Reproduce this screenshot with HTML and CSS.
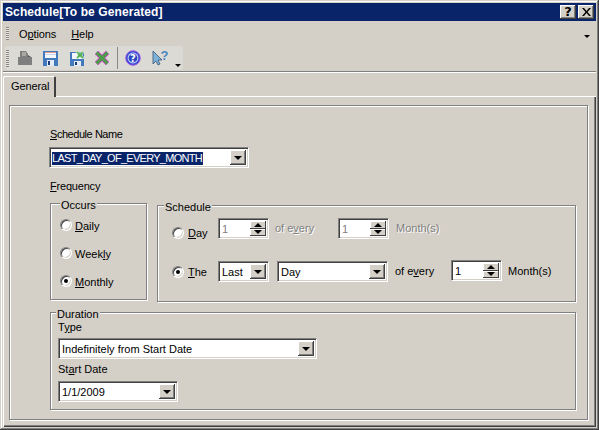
FILE: index.html
```html
<!DOCTYPE html>
<html lang="en">
<head>
<meta charset="utf-8">
<title>Schedule</title>
<link rel="stylesheet" href="styles.css">
</head>
<body>
<div class="window">
  <div class="titlebar">
    <span class="title">Schedule[To be Generated]</span>
    <span class="capbtn qm">?</span>
    <span class="capbtn cl"><svg width="9" height="8" viewBox="0 0 9 8"><path d="M0 0h2l2.500 3 2.500-3h2L5.500 4 9 8H7L4.500 5 2 8H0l3.500-4z" fill="#000"/></svg></span>
  </div>
  <div class="menubar">
    <span class="grip"></span>
    <span class="menuitem opt">O<u>p</u>tions</span>
    <span class="menuitem"><u>H</u>elp</span>
    <span class="chev"></span>
  </div>
  <div class="toolrow">
    <div class="toolbar">
      <span class="grip short"></span>
      <svg class="ic i1" width="16" height="16" viewBox="0 0 16 16"><path d="M3 1h6l2 3v3h4v8H1V7h2z" fill="#7f7f7f"/><path d="M5 2h4v4H5z" fill="#aaa8a3"/><path d="M11 5l3 2h-3z" fill="#55534f"/></svg>
      <svg class="ic i2" width="15" height="15" viewBox="0 0 15 15"><path d="M0 0h15v15H0z" fill="#4279bd"/><path d="M2 1h11v6H2z" fill="#f4f7fb"/><path d="M2 1h11v1H2z" fill="#e79a90"/><path d="M2 3h11v1H2z" fill="#c9d8ec"/><path d="M4 9h7v6H4z" fill="#e4ebf5"/><path d="M5 10h2v4H5z" fill="#1c3d78"/></svg>
      <svg class="ic i3" width="16" height="16" viewBox="0 0 16 16"><path d="M1 2h14v14H1z" fill="#4279bd"/><path d="M3 3h10v6H3z" fill="#f4f7fb"/><path d="M5 11h7v5H5z" fill="#e4ebf5"/><path d="M6 12h2v3H6z" fill="#1c3d78"/><path d="M8 1l3 2 3-2 1 1-2 3 2 3-1 1-3-2-3 2-1-1 2-3-2-3z" fill="#55b055" stroke="#e0f4e0" stroke-width=".7"/></svg>
      <svg class="ic i4" width="16" height="16" viewBox="0 0 16 16"><path d="M2.500 2.500l11 11M13.500 2.500l-11 11" stroke="#e040e0" stroke-width="4.600"/><path d="M2.500 2.500l11 11M13.500 2.500l-11 11" stroke="#4f9a4a" stroke-width="3.200"/></svg>
      <span class="tsep"></span>
      <svg class="ic i5" width="16" height="16" viewBox="0 0 16 16"><circle cx="8" cy="8" r="7.300" fill="#3b4fd8" stroke="#a050e0" stroke-width=".9"/><circle cx="8" cy="8" r="5.400" fill="#c8d4f4"/><circle cx="8" cy="8" r="4.400" fill="#2d43c0"/><text class="qmark" x="8" y="11.500" text-anchor="middle">?</text></svg>
      <svg class="ic i6" width="17" height="16" viewBox="0 0 17 16"><path d="M1 1v13l3-3 2 4 2-1-2-4h4z" fill="#7fb2d8" stroke="#39577a" stroke-width=".8"/><text class="qsmall" x="12.500" y="10" text-anchor="middle">?</text></svg>
      <span class="chev small"></span>
    </div>
  </div>
  <div class="tabstrip">
    <span class="tab">General</span>
  </div>
  <div class="tabpage">
    <div class="inner">
      <label class="lab l-name"><u>S</u>chedule Name</label>
      <div class="control combo selected w200"><span class="val"><span class="sel">LAST_DAY_OF_EVERY_MONTH</span></span><span class="drop"><i></i></span></div>
      <label class="lab l-freq"><u>F</u>requency</label>
      <div class="freq">
        <div class="group occurs">
          <span class="legend lg-occ">Occurs</span>
          <div class="radrow"><span class="radio"></span><span class="lab"><u>D</u>aily</span></div>
          <div class="radrow"><span class="radio"></span><span class="lab">Week<u>l</u>y</span></div>
          <div class="radrow"><span class="radio on"></span><span class="lab"><u>M</u>onthly</span></div>
        </div>
        <div class="group sched">
          <span class="legend lg-sch">Schedule</span>
          <div class="srow r1">
            <span class="radio low"></span>
            <span class="lab tag low"><u>D</u>ay</span>
            <div class="control spin dis w51"><span class="val">1</span><span class="arrows"><b class="up"></b><b class="dn"></b></span></div>
            <span class="lab dimt g1">of e<u>v</u>ery</span>
            <div class="control spin dis w51"><span class="val">1</span><span class="arrows"><b class="up"></b><b class="dn"></b></span></div>
            <span class="lab dimt g2 g2b">Month(s)</span>
          </div>
          <div class="srow r2">
            <span class="radio on"></span>
            <span class="lab tag"><u>T</u>he</span>
            <div class="control combo w51"><span class="val">Last</span><span class="drop"><i></i></span></div>
            <div class="control combo w111 g3"><span class="val">Day</span><span class="drop"><i></i></span></div>
            <span class="lab g4">of e<u>v</u>ery</span>
            <div class="control spin w51 g5"><span class="val">1</span><span class="arrows"><b class="up"></b><b class="dn"></b></span></div>
            <span class="lab g2">Month(s)</span>
          </div>
        </div>
      </div>
      <div class="group duration">
        <span class="legend lg-dur">Duration</span>
        <label class="lab l-type">T<u>y</u>pe</label>
        <div class="control combo w259"><span class="val">Indefinitely from Start Date</span><span class="drop"><i></i></span></div>
        <label class="lab l-start">St<u>a</u>rt Date</label>
        <div class="control combo w120"><span class="val">1/1/2009</span><span class="drop"><i></i></span></div>
      </div>
    </div>
  </div>
</div>
</body>
</html>
```

FILE: styles.css
```css
* { box-sizing: border-box; }
html, body { margin: 0; padding: 0; }
body { width: 599px; height: 430px; overflow: hidden; background: #d4d0c8; }

.window {
  width: 599px; height: 430px;
  padding: 3px;
  display: flex; flex-direction: column;
  background: #d4d0c8;
  font: 11px/13px "Liberation Sans", Arial, sans-serif;
  color: #000;
  box-shadow: inset -1px -1px #404040, inset 1px 1px #d4d0c8, inset -2px -2px #808080, inset 2px 2px #fff;
}

.titlebar {
  height: 18px; flex: none;
  display: flex; align-items: center;
  padding: 0 2px;
  background: #0a246a;
  color: #fff;
}
.title { font: bold 12px/18px "Liberation Sans", sans-serif; letter-spacing: 0.1px; flex: 1; }
.capbtn {
  width: 16px; height: 14px; flex: none;
  display: flex; align-items: center; justify-content: center;
  background: #d4d0c8; color: #000;
  box-shadow: inset -1px -1px #404040, inset 1px 1px #fff, inset -2px -2px #808080;
}
.qm { font: bold 13px/14px "DejaVu Sans", sans-serif; margin-right: 2px; }

.menubar {
  height: 25px; flex: none;
  display: flex; align-items: center;
  position: relative;
  padding-left: 3px;
}
.grip {
  width: 3px; height: 13px; flex: none;
  background: repeating-linear-gradient(#8a8782 0 1px, #e8e6e2 1px 2px);
}
.menuitem { padding-top: 1px; margin-right: 15px; letter-spacing: -0.1px; }
.opt { margin-left: 10px; }
.chev { width: 0; height: 0; border: 3px solid transparent; border-top: 3px solid #000; border-bottom: 0; margin-left: auto; margin-right: 6px; margin-top: 6px; }

.toolrow { height: 24px; flex: none; padding-left: 2px; display: flex; }
.toolbar {
  width: 178px; height: 24px;
  display: flex; align-items: center;
  background: #dcdad5;
  border-radius: 3px;
  padding-left: 1px;
}
.grip.short { height: 17px; }
.ic { flex: none; }
.i1 { margin-left: 8px; }
.i2 { margin-left: 10px; }
.i3 { margin-left: 11px; }
.i4 { margin-left: 9px; }
.tsep { width: 1px; height: 22px; background: #8a8782; margin-left: 7px; flex: none; }
.i5 { margin-left: 7px; }
.i6 { margin-left: 11px; }
.qmark { font: bold 10px "DejaVu Sans", sans-serif; fill: #fff; }
.qsmall { font: bold 13px "Liberation Sans", sans-serif; fill: #4a86c0; }
.chev.small { margin: 14px 0 0 6px; }

.tabstrip {
  height: 26px; flex: none;
  border-top: 1px solid #808080;
  box-shadow: inset 0 1px #fff;
  padding-top: 4px;
  margin-top: 1px;
  position: relative;
  z-index: 1;
  display: flex;
}
.tab {
  width: 53px; height: 21px;
  padding: 3px 0 0 7px;
  background: #d4d0c8;
  border-left: 1px solid #fff; border-top: 1px solid #fff;
  border-right: 2px solid #404040;
  border-radius: 2px 2px 0 0;
  margin-bottom: -1px;
  letter-spacing: -0.1px;
}

.tabpage {
  flex: 1; min-height: 0;
  padding: 8px 8px 5px 5px;
  border-top: 1px solid #fff;
  border-left: 1px solid #fff;
  box-shadow: inset -1px -1px #404040, inset -2px -2px #808080;
  margin-top: -1px;
}
.inner {
  height: 315px;
  border: 1px solid #808080;
  box-shadow: 1px 1px #fff, inset 1px 1px #fff;
  padding: 0 0 0 39px;
  display: flex; flex-direction: column;
  align-items: flex-start;
}
.lab { display: inline-block; line-height: 13px; white-space: nowrap; }
.l-name { margin: 22px 0 0 1px; letter-spacing: -0.45px; }
.l-freq { margin: 12px 0 0 1px; letter-spacing: -0.2px; }

.control {
  height: 21px; flex: none;
  display: flex; align-items: stretch;
  padding: 2px;
  background: #fff;
  border: 1px solid; border-color: #808080 #fff #fff #808080;
  box-shadow: inset 1px 1px #404040, inset -1px -1px #d4d0c8;
}
.val { flex: 1; padding: 2px 0 0 1px; white-space: nowrap; overflow: hidden; line-height: 13px; }
.sel { background: #0a246a; color: #fff; display: inline-block; height: 13px; padding: 0 1px 0 0; margin-left: -1px; letter-spacing: -0.72px; }
.drop {
  width: 16px; flex: none;
  display: flex; align-items: center; justify-content: center;
  background: #d4d0c8;
  box-shadow: inset -1px -1px #404040, inset 1px 1px #fff, inset -2px -2px #808080;
}
.drop i { width: 0; height: 0; border: 4px solid transparent; border-top: 4px solid #000; border-bottom: 0; }
.w200 { width: 200px; margin-top: 6px; }
.w51 { width: 51px; }
.w111 { width: 111px; }
.w259 { width: 259px; }
.w120 { width: 120px; }

.arrows { width: 16px; flex: none; display: flex; flex-direction: column; }
.arrows b {
  flex: 1; display: flex; align-items: center; justify-content: center;
  background: #d4d0c8;
  box-shadow: inset -1px -1px #404040, inset 1px 1px #fff;
}
.arrows b::after { content: ""; width: 0; height: 0; border: 4px solid transparent; }
.arrows .up::after { border-top: 0; border-bottom: 4px solid #000; }
.arrows .dn::after { border-bottom: 0; border-top: 4px solid #000; }

.dis .val { color: #808080; }
.dimt { color: #808080; text-shadow: 1px 1px #fff; }

.freq { display: flex; align-items: flex-start; gap: 10px; margin: 10px 0 0 1px; }
.group {
  position: relative;
  border: 1px solid #808080;
  box-shadow: 1px 1px #fff, inset 1px 1px #fff;
}
.legend {
  position: absolute;
  background: #d4d0c8;
  padding: 0 1px;
  line-height: 13px;
}
.lg-occ { left: 9px; top: -5px; }
.lg-sch { left: 6px; top: -5px; }
.lg-dur { left: 5px; top: -5px; }

.occurs { width: 97px; height: 97px; padding: 14px 0 0 9px; display: flex; flex-direction: column; gap: 15px; }
.radrow { display: flex; align-items: center; height: 13px; }
.radrow .lab { margin-left: 3px; padding-top: 4px; }
.radio {
  width: 12px; height: 12px; flex: none;
  border-radius: 50%;
  background: #fff;
  border: 1px solid; border-color: #808080 #fff #fff #808080;
  box-shadow: inset 1px 1px #404040, inset -1px -1px #d4d0c8;
  display: flex; align-items: center; justify-content: center;
}
.radio.on::after { content: ""; width: 4px; height: 4px; border-radius: 50%; background: #000; }
.low { margin-top: 8px; }

.sched { width: 419px; height: 97px; margin-top: 2px; padding: 12px 0 0 14px; display: flex; flex-direction: column; gap: 22px; }
.srow { display: flex; align-items: center; height: 21px; }
.tag { margin-left: 4px; width: 30px; padding-top: 1px; }
.g1 { margin-left: 6px; width: 63px; }
.g2 { margin-left: 6px; }
.g2b { margin-left: 7px; }
.g3 { margin-left: 8px; }
.g4 { margin-left: 7px; width: 56px; }
.g5 { margin-bottom: 2px; }

.duration {
  width: 526px; height: 98px;
  margin: 10px 0 0 1px;
  padding: 8px 0 0 7px;
  display: flex; flex-direction: column;
}
.l-type { margin-bottom: 4px; }
.l-start { margin: 4px 0 5px; }
```
